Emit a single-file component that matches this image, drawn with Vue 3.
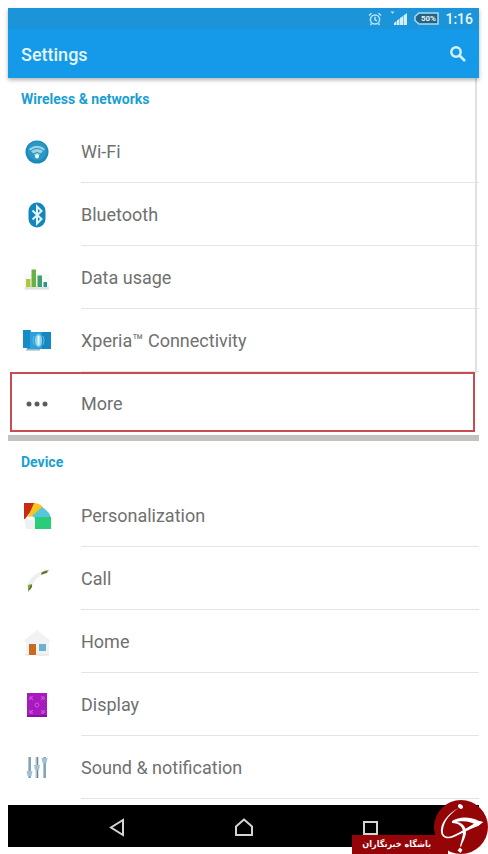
<template>
  <div class="page">
    <div class="phone">
      <header class="top">
        <div class="status">
          <svg class="alarm" viewBox="0 0 14 14">
            <circle cx="7" cy="7.5" r="4.6" />
            <path d="M7 4.8v3l2 1M1 3.5L3.5 1.2M13 3.5L10.5 1.2M3.5 11.5L2.5 13M10.5 11.5L11.5 13" />
          </svg>
          <svg class="signal" viewBox="0 0 18 15">
            <path d="M0.5 0.5h4L2.5 3z" opacity="0.8" />
            <path d="M4 14v-2l2.500-2v4zM7 14V9.500L9.500 7.500V14zM10 14V7l3-2v9zM13.500 14V4.500L17 2v12z" />
          </svg>
          <span class="battery">
            <svg viewBox="0 0 25 13">
              <path d="M5 1h19v11H5L1 8.500v-4z" fill="#27627f" stroke="#a9dcf2" stroke-width="1.500" />
            </svg>
            <span class="percent">50%</span>
          </span>
          <span class="clock">1:16</span>
        </div>
        <div class="bar">
          <h1>Settings</h1>
          <button class="search" type="button" aria-label="Search">
            <svg viewBox="0 0 18 18">
              <circle cx="7" cy="7" r="4.700" />
              <path d="M10.500 10.500L16 16" />
            </svg>
          </button>
        </div>
      </header>

      <main>
        <section v-for="section in sections" :key="section.title">
          <h2>{{ section.title }}</h2>
          <ul>
            <li v-for="item in section.items" :key="item.icon" :class="{ marked: item.icon === 'more' }">
              <a href="#">
                <svg class="icon" viewBox="0 0 30 30">
                  <g v-if="item.icon === 'wifi'">
                    <circle cx="15" cy="15" r="11.500" fill="#1b8abb" />
                    <circle cx="15" cy="14" r="9.500" fill="#2998c7" />
                    <path d="M7 12q8-6.500 16 0l-8 8.500z" fill="#9bd5e6" />
                    <path d="M8.500 14q6.500-5 13 0M11 17q4-3 8 0" fill="none" stroke="#278fb8" stroke-width="1" />
                    <circle cx="15" cy="19.500" r="2" fill="#f4ffff" />
                  </g>
                  <g v-else-if="item.icon === 'bluetooth'">
                    <rect x="6.500" y="2.500" width="17" height="25" rx="8.500" fill="#1486bd" />
                    <path d="M10.500 10.500l9 8.500-4.500 4.500v-17l4.500 4.500-9 8.500" fill="none" stroke="#e3f6fb" stroke-width="2" />
                  </g>
                  <g v-else-if="item.icon === 'data'">
                    <path d="M2 11h25v16H2z" fill="#f8f8f7" />
                    <path d="M3 24h24v2.500H3z" fill="#dfe2df" />
                    <path d="M4 16h4.500v8H4z" fill="#b1c63b" />
                    <path d="M9.500 6.500H14V24H9.500z" fill="#67b342" />
                    <path d="M15.500 12.500H20V24h-4.500z" fill="#39a36b" />
                    <path d="M21.500 19H25v5h-3.500z" fill="#2b9297" />
                  </g>
                  <g v-else-if="item.icon === 'xperia'">
                    <path d="M1 4h8v2h20v17H18v1H5v-2H1z" fill="#2ba0d9" />
                    <path d="M1 4h7v18H1z" fill="#168cc6" />
                    <path d="M20 6h9v17h-9z" fill="#1787c0" />
                    <path d="M4 24h14" stroke="#b8c5cd" stroke-width="1.500" />
                    <ellipse cx="16.500" cy="14.500" rx="3.700" ry="6.500" fill="#8ad1eb" />
                    <path d="M16.500 10v9" fill="none" stroke="#e4f7fc" stroke-width="2" />
                    <path d="M12 10q-2 4.500 0 9M21 10q2 4.500 0 9" fill="none" stroke="#62bce2" stroke-width="1" />
                  </g>
                  <g v-else-if="item.icon === 'more'" fill="#5d5d5d">
                    <circle cx="7" cy="15" r="2.500" />
                    <circle cx="15" cy="15" r="2.500" />
                    <circle cx="23" cy="15" r="2.500" />
                  </g>
                  <g v-else-if="item.icon === 'personal'">
                    <path d="M2 17l11 3v8H4z" fill="#f0f0f0" />
                    <path d="M2 2h11v3L3 18H2z" fill="#c92a12" />
                    <path d="M12 2q5 0 9 4l-9 9-6 1z" fill="#f7c51b" />
                    <path d="M20 6q8 5 9 11H13l-3-2z" fill="#56c6dc" />
                    <path d="M13 16h16v12H13z" fill="#2acb79" />
                  </g>
                  <g v-else-if="item.icon === 'call'">
                    <path d="M5 21Q9 11 20 7l2 3q-8 3-12 12l-4 4z" fill="#efefef" />
                    <path d="M19 9q3-3 8-3l-2 3-6 2z" fill="#9dad65" />
                    <path d="M20 9.500l5-2" stroke="#526b26" stroke-width="1.500" />
                    <path d="M6 21l4-1v3l-4 5z" fill="#86a34f" />
                    <path d="M7.500 25.500l2-4" stroke="#52712d" stroke-width="1.500" />
                  </g>
                  <g v-else-if="item.icon === 'home'">
                    <path d="M1 14L15 3l14 11-2 1v13H4V15z" fill="#f1f2f3" />
                    <path d="M7 17h7v11H7z" fill="#cb691c" />
                    <path d="M17 17h7v7h-7z" fill="#6ab4d1" />
                    <path d="M3 28h4M14 28h13" stroke="#dedede" />
                  </g>
                  <g v-else-if="item.icon === 'display'">
                    <path d="M5 3h20v24H5z" fill="#a81ac0" />
                    <path d="M5 25h20v2H5z" fill="#87109c" />
                    <circle cx="15" cy="15" r="2" fill="none" stroke="#cb55dc" />
                    <path d="M8 10V7h3M19 7h3v3M8 20v3h3M19 23h3v-3M9 8l2 2M21 8l-2 2M9 22l2-2M21 22l-2-2" fill="none" stroke="#d266df" />
                  </g>
                  <g v-else>
                    <path d="M7.500 4v21M15 4v21M22.500 4v21" stroke="#b3c2cd" stroke-width="3" />
                    <path d="M8 4v21M15.500 4v21M23 4v21" stroke="#5f86a2" stroke-width="1" />
                    <path d="M4.500 18h6l-1 5h-4zM12 12h6l-1 5h-4zM19.500 5h6l-1 5h-4z" fill="#9ec3d8" />
                  </g>
                </svg>
                <span>{{ item.label }}</span>
              </a>
            </li>
          </ul>
        </section>
      </main>

      <nav>
        <button type="button" aria-label="Back">
          <svg viewBox="0 0 20 20"><path d="M16 3v15L4 10.500z" /></svg>
        </button>
        <button type="button" aria-label="Home">
          <svg viewBox="0 0 20 20"><path d="M10 2.500L18 9.500v8.500H2V9.500z" /></svg>
        </button>
        <button type="button" aria-label="Recent apps">
          <svg viewBox="0 0 20 20"><path d="M3 5h13v12H3z" /></svg>
        </button>
      </nav>
    </div>

    <div class="watermark">
      <span class="ribbon" lang="fa" dir="rtl">باشگاه خبرنگاران</span>
      <svg class="seal" viewBox="0 0 54 54">
        <circle cx="27" cy="27" r="27" fill="#950508" />
        <ellipse cx="26.500" cy="6.500" rx="2.800" ry="2" transform="rotate(35 26.500 6.500)" fill="#fff" />
        <path d="M24.500 8C15 13 8 21 7 29c-1 9 6 11 13 8 9-4 15-8 24-11l5-4-5-1C36 26 27 32 19 35.500c-7 3-11 0-10-6C10 21 16 14 24.500 8z" fill="#fff" />
        <path d="M18 21c7-4 16-5 27 0l4 1-5 4c-7-5-16-6-26-3z" fill="#fff" />
        <path d="M18 22c9-1 14 4 14 10 0 5-3 9-5 15l-1-1c1-5 3-9 3-14 0-5-4-9-11-9z" fill="#fff" />
        <path d="M26 47.500l2.500 2.500-2 3-3-2.500z" fill="#fff" />
      </svg>
    </div>
  </div>
</template>

<script setup>
const sections = [
  {
    title: 'Wireless & networks',
    items: [
      { icon: 'wifi', label: 'Wi-Fi' },
      { icon: 'bluetooth', label: 'Bluetooth' },
      { icon: 'data', label: 'Data usage' },
      { icon: 'xperia', label: 'Xperia™ Connectivity' },
      { icon: 'more', label: 'More' },
    ],
  },
  {
    title: 'Device',
    items: [
      { icon: 'personal', label: 'Personalization' },
      { icon: 'call', label: 'Call' },
      { icon: 'home', label: 'Home' },
      { icon: 'display', label: 'Display' },
      { icon: 'sound', label: 'Sound & notification' },
    ],
  },
];
</script>

<style>
body {
  margin: 0;
  background: #fff;
}
</style>

<style scoped>
.page {
  position: relative;
  padding: 8px 9px 7px 8px;
  font-family: Roboto, "Liberation Sans", sans-serif;
  overflow: hidden;
}

.top {
  background: #149ae8;
  color: #e4f6fe;
  box-shadow: 0 2px 4px rgba(0, 0, 0, 0.3);
  position: relative;
  z-index: 1;
}

.status {
  display: flex;
  align-items: center;
  justify-content: flex-end;
  height: 21px;
  padding-right: 6px;
  background: #1c94d9;
}

.alarm {
  width: 14px;
  height: 14px;
  margin-right: 8px;
  fill: none;
  stroke: #b9e3f7;
  stroke-width: 1.5;
}

.signal {
  width: 18px;
  height: 15px;
  margin-right: 6px;
  fill: #d3f0fa;
}

.battery {
  display: grid;
  place-items: center;
  margin-right: 6px;
}

.battery svg,
.percent {
  grid-area: 1 / 1;
}

.battery svg {
  width: 25px;
  height: 13px;
}

.percent {
  padding-left: 3px;
  font-size: 8px;
  line-height: 10px;
  font-weight: 700;
}

.clock {
  font-size: 14px;
  line-height: 20px;
  font-weight: 500;
}

.bar {
  display: flex;
  align-items: center;
  justify-content: space-between;
  height: 49px;
  padding: 0 12px 0 13px;
}

h1 {
  margin: 0;
  padding-top: 2px;
  font-size: 18px;
  line-height: 24px;
  font-weight: 500;
}

button {
  padding: 0;
  border: 0;
  background: none;
}

.search svg {
  display: block;
  width: 18px;
  height: 18px;
  fill: none;
  stroke: #d5f1fd;
  stroke-width: 2.5;
}

section {
  position: relative;
}

section:first-child {
  border-bottom: 6px solid #c2c2be;
}

/* scroll bar thumb */
section:first-child::after {
  content: "";
  position: absolute;
  top: 0;
  right: 2px;
  bottom: 62px;
  width: 2px;
  background: #e0e0e0;
}

h2 {
  margin: 0;
  padding: 0 13px;
  color: #1a9fd3;
  font-size: 14px;
  line-height: 43px;
  font-weight: 700;
}

ul {
  margin: 0;
  padding: 0;
  list-style: none;
}

section:first-child ul {
  margin-top: -1px;
}

li {
  position: relative;
}

a {
  display: flex;
  align-items: center;
  height: 63px;
  padding-left: 14px;
  color: #707070;
  font-size: 18px;
  text-decoration: none;
}

a span {
  flex: 1;
  margin-left: 29px;
  padding-top: 2px;
  line-height: 60px;
  border-bottom: 1px solid #e4e4e4;
}

.icon {
  width: 30px;
  height: 30px;
}

.marked a span {
  border-bottom-color: transparent;
}

.marked::after {
  content: "";
  position: absolute;
  inset: 0 4px 3px 2px;
  border: 2px solid #c84b54;
}

nav {
  display: grid;
  grid-template-columns: repeat(3, 1fr);
  margin-top: 6px;
  padding: 0 45px;
  height: 42px;
  background: #000;
}

nav button {
  display: grid;
  place-items: center;
}

nav svg {
  width: 20px;
  height: 20px;
  margin-top: 2px;
  fill: none;
  stroke: #d4d4d4;
  stroke-width: 2;
}

.watermark {
  position: absolute;
  right: 0;
  bottom: 0;
  display: flex;
  align-items: flex-end;
}

.ribbon {
  width: 96px;
  margin-right: -14px;
  padding-right: 17px;
  box-sizing: border-box;
  background: #950508;
  color: #fff;
  font-family: "DejaVu Sans Condensed", "DejaVu Sans", sans-serif;
  font-size: 9px;
  line-height: 19px;
  font-weight: 700;
  white-space: nowrap;
}

.seal {
  width: 54px;
  height: 54px;
}
</style>
